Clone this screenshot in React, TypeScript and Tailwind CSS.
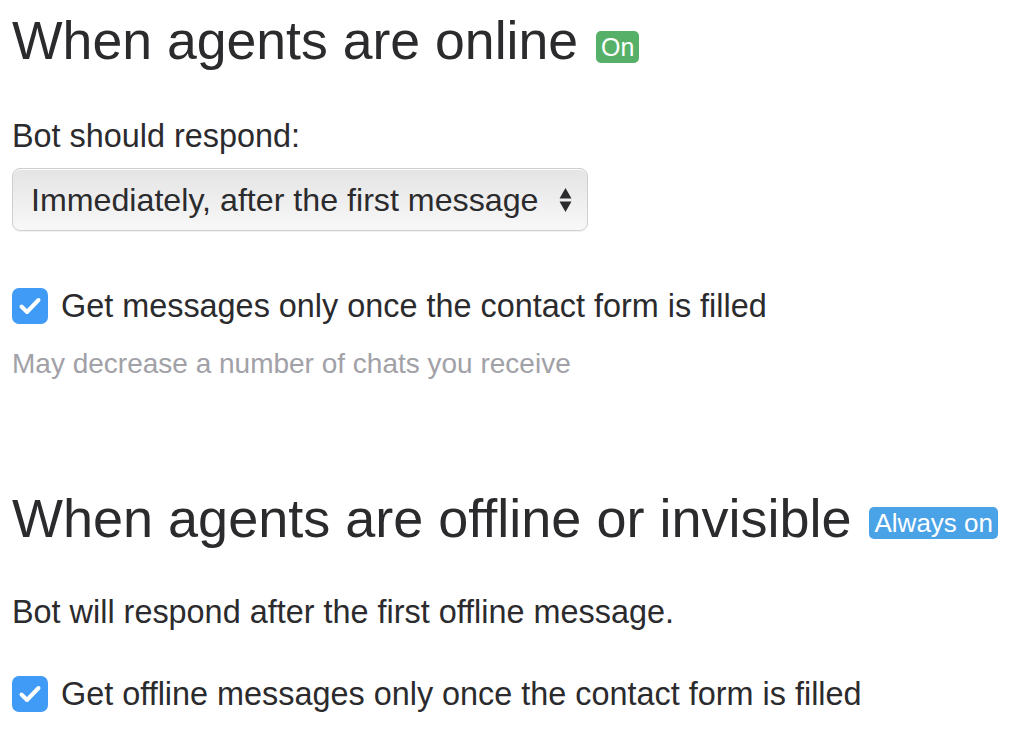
import React from 'react';

const font = { fontFamily: '"Liberation Sans", Arial, sans-serif' };

const Checkbox: React.FC = () => (
  <span className="flex h-[36px] w-[36px] shrink-0 items-center justify-center rounded-[7px] bg-[#3f9bf6]">
    <svg width="36" height="36" viewBox="0 0 36 36" fill="none">
      <path d="M9.5 18.5l5.5 5.5L26.5 12" stroke="#fff" strokeWidth="4" strokeLinecap="round" strokeLinejoin="round" />
    </svg>
  </span>
);

const App: React.FC = () => {
  return (
    <div className="h-[730px] w-[1010px] bg-white pl-[12px] text-[#2b2b2e]" style={font}>
      <div className="flex items-start pt-[10px]">
        <h1 className="text-[53.6px] leading-[60px] font-normal">When agents are online</h1>
        <span className="ml-[18px] mt-[21px] h-[32px] rounded-[5px] bg-[#56b068] px-[5px] text-[25px] leading-[32px] text-white">
          On
        </span>
      </div>

      <p className="mt-[46px] text-[32.4px] leading-[40px]">Bot should respond:</p>

      <div className="mt-[12px] flex h-[63px] w-[576px] items-center justify-between rounded-[8px] border border-[#cfcfcf] bg-gradient-to-b from-[#e4e4e4] to-[#f8f8f8] pl-[18px] pr-[15px] shadow-[inset_0_1px_0_rgba(255,255,255,0.8),0_1px_1px_rgba(0,0,0,0.06)]">
        <span className="text-[32.2px] leading-[40px]">Immediately, after the first message</span>
        <svg width="13" height="26" viewBox="0 0 13 26">
          <path d="M6.5 1L12.5 11.5H0.5Z" fill="#2b2b2e" />
          <path d="M6.5 25L12.5 14.5H0.5Z" fill="#2b2b2e" />
        </svg>
      </div>

      <label className="mt-[55px] flex items-center gap-[13px]">
        <Checkbox />
        <span className="text-[32.4px] leading-[40px]">Get messages only once the contact form is filled</span>
      </label>

      <p className="mt-[21px] text-[28px] leading-[34px] text-[#a1a1a7]">May decrease a number of chats you receive</p>

      <div className="mt-[107px] flex items-start">
        <h1 className="text-[54px] leading-[60px] font-normal">When agents are offline or invisible</h1>
        <span className="ml-[18px] mt-[19px] h-[32px] rounded-[5px] bg-[#4ba3e7] px-[5px] text-[26px] leading-[32px] text-white">
          Always on
        </span>
      </div>

      <p className="mt-[44px] text-[32.4px] leading-[40px]">Bot will respond after the first offline message.</p>

      <label className="mt-[42px] flex items-center gap-[13px]">
        <Checkbox />
        <span className="text-[32.4px] leading-[40px]">Get offline messages only once the contact form is filled</span>
      </label>
    </div>
  );
};

export default App;
